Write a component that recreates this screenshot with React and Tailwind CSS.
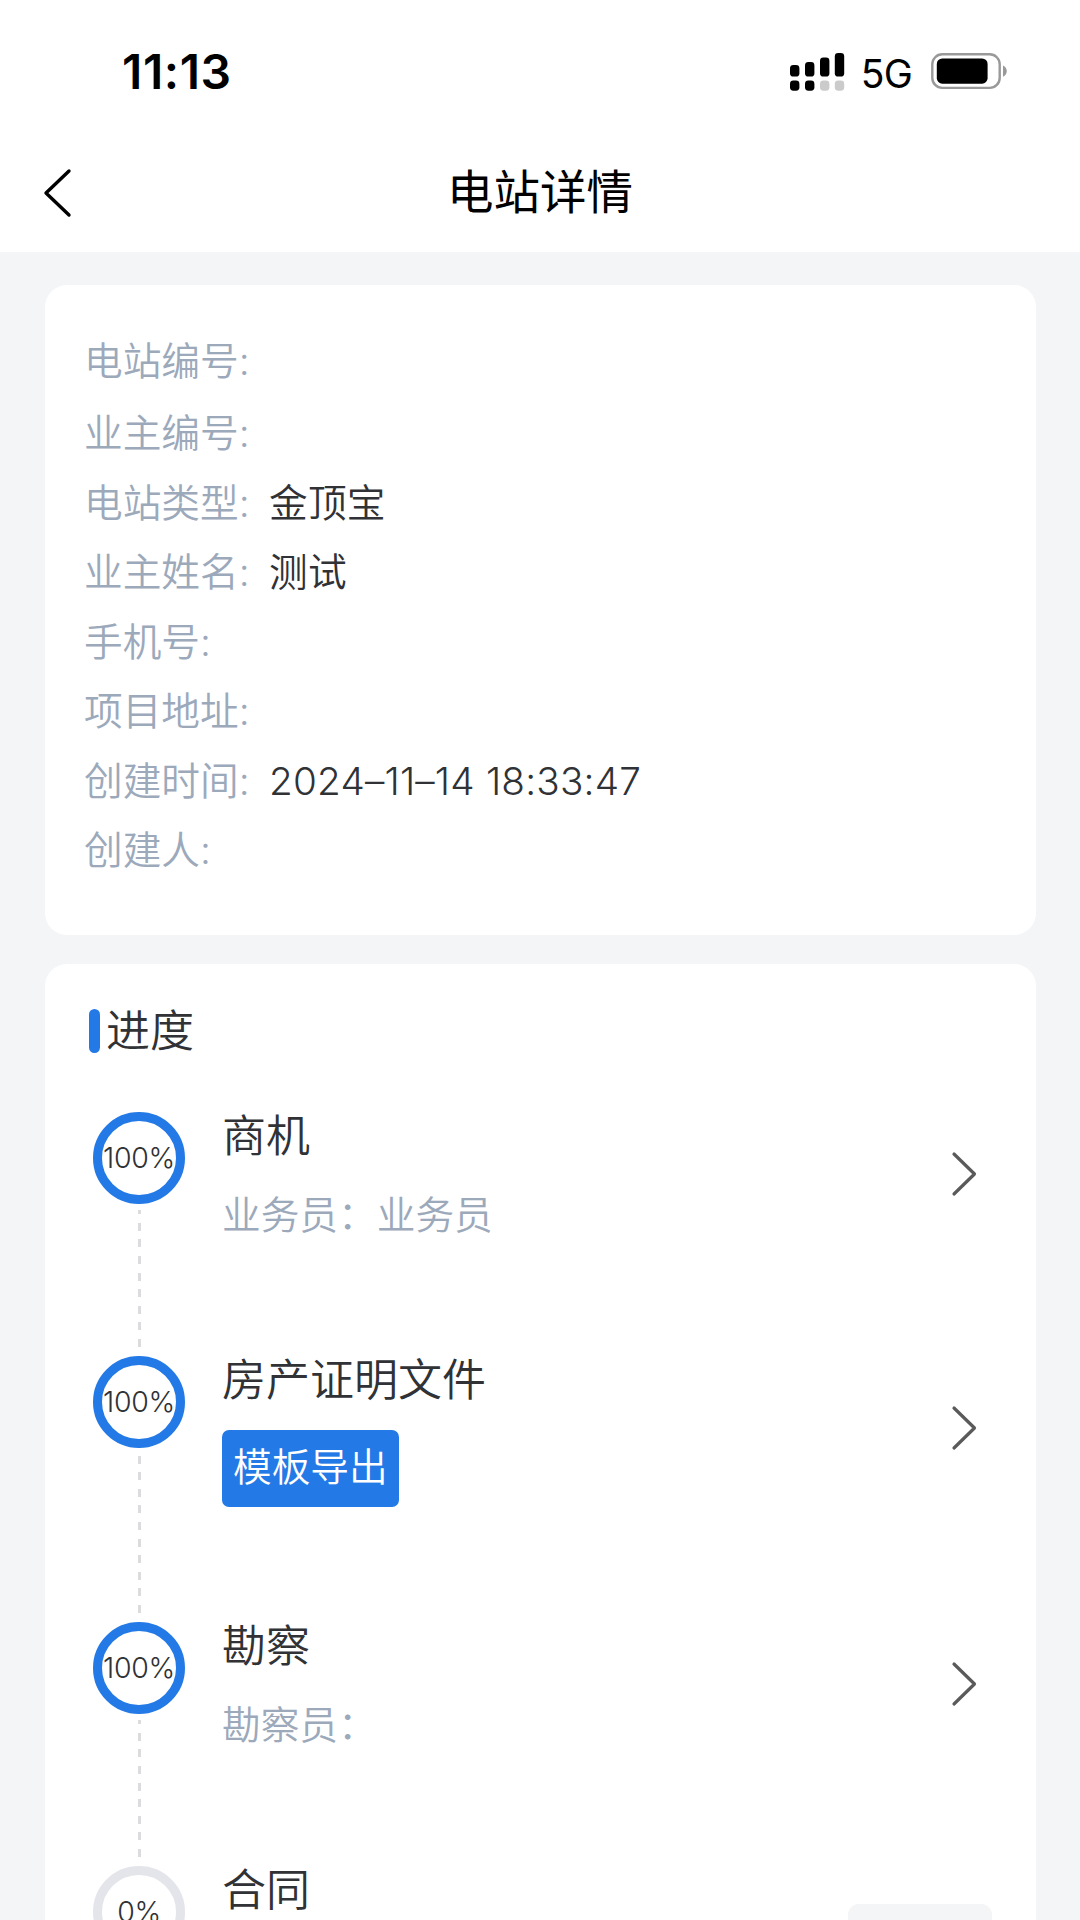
const stationInfo = [
  { label: "电站编号:", value: "" },
  { label: "业主编号:", value: "" },
  { label: "电站类型:", value: "金顶宝" },
  { label: "业主姓名:", value: "测试" },
  { label: "手机号:", value: "" },
  { label: "项目地址:", value: "" },
  { label: "创建时间:", value: "2024–11–14 18:33:47" },
  { label: "创建人:", value: "" },
];

const steps = [
  { title: "商机", percent: 100, desc: "业务员：业务员" },
  { title: "房产证明文件", percent: 100, action: "模板导出" },
  { title: "勘察", percent: 100, desc: "勘察员：" },
  { title: "合同", percent: 0 },
];

function SignalIcon() {
  return (
    <svg width="55" height="38" viewBox="0 0 55 38" fill="#000" className="mt-[3px]">
      <rect x="0" y="12" width="9.4" height="11.6" rx="3.4" />
      <rect x="15" y="9" width="9.4" height="14.6" rx="3.4" />
      <rect x="30" y="4.5" width="9.4" height="19.1" rx="3.4" />
      <rect x="44.8" y="0" width="9.4" height="23.6" rx="3.4" />
      <rect x="0" y="27.5" width="9.4" height="10.2" rx="3.4" />
      <rect x="15" y="27.5" width="9.4" height="10.2" rx="3.4" />
      <rect x="30" y="27.5" width="9.4" height="10.2" rx="3.4" fill="#cbcbcb" />
      <rect x="44.8" y="27.5" width="9.4" height="10.2" rx="3.4" fill="#cbcbcb" />
    </svg>
  );
}

function BatteryIcon() {
  return (
    <svg width="77" height="37" viewBox="0 0 77 37" fill="none" className="mt-[3px]">
      <rect x="1.3" y="1.3" width="67.4" height="33.6" rx="10" stroke="#999" strokeWidth="2.4" />
      <rect x="5.8" y="5.5" width="50.8" height="25.2" rx="5.5" fill="#000" />
      <path d="M72 12.4C74.3 13.4 75.8 15.6 75.8 18.1C75.8 20.6 74.3 22.9 72 23.8Z" fill="#999" />
    </svg>
  );
}

function StatusBar() {
  return (
    <div className="flex h-[140px] items-center pl-[122px] pr-[72px] text-black">
      <span className="flex-1 text-[48px] leading-[60px] font-semibold tracking-[0.6px] pt-[4px]">
        11:13
      </span>
      <SignalIcon />
      <span className="mr-[19px] ml-[16px] pt-[7px] text-[39px] leading-[48px] font-normal tracking-[-0.8px]">
        5G
      </span>
      <BatteryIcon />
    </div>
  );
}

function NavBar() {
  return (
    <div className="grid h-[112px] grid-cols-[140px_1fr_140px] items-center pb-[9px]">
      <button className="pt-[3px] pl-[42px]">
        <svg width="30" height="50" viewBox="0 0 30 50" fill="none">
          <path
            d="M27 3L4 25L27 47"
            stroke="#000"
            strokeWidth="3.4"
            strokeLinecap="round"
            strokeLinejoin="round"
          />
        </svg>
      </button>
      <h1 className="text-center text-[46.5px] leading-[56px] text-black">电站详情</h1>
    </div>
  );
}

function StationCard() {
  return (
    <div className="h-[650px] shrink-0 rounded-[22px] bg-white px-[39px] pt-[42px]">
      {stationInfo.map((item) => (
        <div
          key={item.label}
          className="flex text-[38.7px] leading-[69.5px] whitespace-nowrap nth-2:mt-[2.5px]"
        >
          <span className="w-[185px] font-[350] text-[#9ca9bb]">{item.label}</span>
          <span className="font-[350] tracking-[0.2px] text-[#303236]">{item.value}</span>
        </div>
      ))}
    </div>
  );
}

function ProgressRing({ percent }) {
  return (
    <div
      className={`flex size-[92px] shrink-0 items-center justify-center rounded-full border-[9px] text-[28.5px] font-light tracking-[-0.3px] whitespace-nowrap text-[#303236] ${
        percent === 100 ? "border-[#2379e6]" : "border-[#e4e5ea]"
      }`}
    >
      {percent}%
    </div>
  );
}

function Chevron() {
  return (
    <svg width="26" height="46" viewBox="0 0 26 46" fill="none">
      <path
        d="M3 3L23.5 23L3 43"
        stroke="#5a5a5a"
        strokeWidth="3.2"
        strokeLinecap="round"
        strokeLinejoin="round"
      />
    </svg>
  );
}

function Step({ step, last }) {
  return (
    <div className={`flex shrink-0 ${step.action ? "h-[266px]" : "h-[244px]"}`}>
      <div className="flex w-[92px] flex-col items-center">
        <ProgressRing percent={step.percent} />
        {!last && (
          <div className="mt-[6px] mb-[9px] ml-[1px] w-[3px] flex-1 bg-[repeating-linear-gradient(to_top,#dcdcdf_0px,#dcdcdf_8px,transparent_8px,transparent_16.6px)]" />
        )}
      </div>
      <div
        className={`ml-[37px] flex flex-1 items-center ${
          step.action ? "h-[144px]" : "h-[123px]"
        }`}
      >
        <div className="flex h-full flex-1 flex-col items-start">
          <h3 className="-mt-[6px] text-[44px] leading-[60px] font-[350] text-[#303236]">
            {step.title}
          </h3>
          {step.desc && (
            <p className="mt-[21px] text-[38.7px] leading-[56px] font-[350] text-[#9ca9bb]">
              {step.desc}
            </p>
          )}
          {step.action && (
            <button className="mt-[20px] h-[77px] rounded-[7px] bg-[#2379e6] px-[11px] pb-[3px] text-[38.7px] leading-[74px] font-[350] text-white">
              {step.action}
            </button>
          )}
        </div>
        {last ? (
          <div className="mr-[5px] mt-[38px] h-[84px] w-[144px] self-start rounded-[11px] bg-[#f4f5f7]" />
        ) : (
          <div className="mr-[20px]">
            <Chevron />
          </div>
        )}
      </div>
    </div>
  );
}

function ProgressCard() {
  return (
    <div className="mt-[29px] flex flex-1 flex-col rounded-t-[22px] bg-white pt-[36px] pr-[39px] pl-[44px]">
      <div className="flex h-[60px] shrink-0 items-center">
        <span className="mt-[2px] h-[44px] w-[11px] rounded-full bg-[#2379e6]" />
        <h2 className="mt-[2px] ml-[6px] text-[44px] leading-[60px] font-[350] text-[#303236]">
          进度
        </h2>
      </div>
      <div className="mt-[52px] flex flex-col pl-[4px]">
        {steps.map((step, i) => (
          <Step key={step.title} step={step} last={i === steps.length - 1} />
        ))}
      </div>
    </div>
  );
}

export default function App() {
  return (
    <div className="flex h-[1920px] w-[1080px] flex-col overflow-hidden bg-white font-['Inter','Noto_Sans_CJK_SC',sans-serif]">
      <StatusBar />
      <NavBar />
      <div className="flex min-h-0 flex-1 flex-col bg-[#f4f5f7] pt-[33px] pr-[44px] pl-[45px]">
        <StationCard />
        <ProgressCard />
      </div>
    </div>
  );
}
